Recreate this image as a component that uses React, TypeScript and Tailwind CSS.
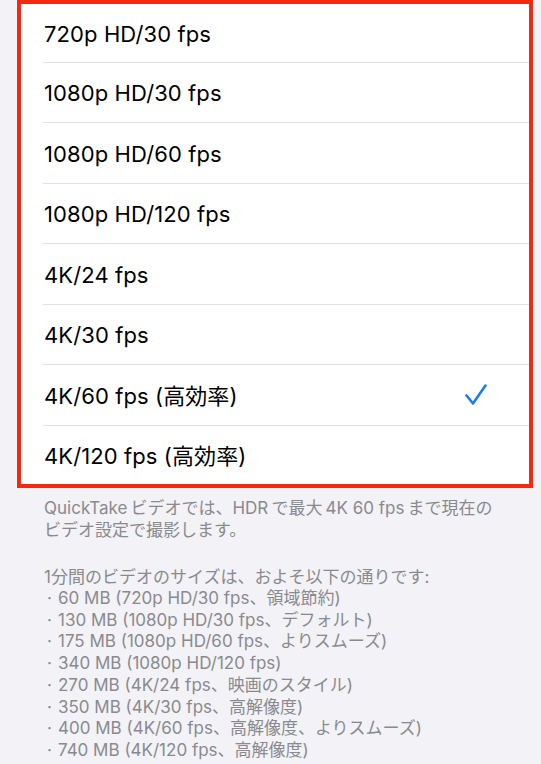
import React from "react";

const options = [
  "720p HD/30 fps",
  "1080p HD/30 fps",
  "1080p HD/60 fps",
  "1080p HD/120 fps",
  "4K/24 fps",
  "4K/30 fps",
  "4K/60 fps (高効率)",
  "4K/120 fps (高効率)",
];

const sizes = [
  "60 MB (720p HD/30 fps、領域節約)",
  "130 MB (1080p HD/30 fps、デフォルト)",
  "175 MB (1080p HD/60 fps、よりスムーズ)",
  "340 MB (1080p HD/120 fps)",
  "270 MB (4K/24 fps、映画のスタイル)",
  "350 MB (4K/30 fps、高解像度)",
  "400 MB (4K/60 fps、高解像度、よりスムーズ)",
  "740 MB (4K/120 fps、高解像度)",
];

function Check() {
  return (
    <svg width="22" height="22" viewBox="0 0 22 22" fill="none">
      <path
        d="M1.5 11.5 L8 19.5 L20.5 1.5"
        stroke="#1a7ef2"
        strokeWidth="2.6"
        strokeLinecap="round"
        strokeLinejoin="round"
      />
    </svg>
  );
}

export default function App() {
  const selected = 6;

  return (
    <div className="w-[541px] h-[764px] overflow-hidden bg-[#f2f2f7] font-['Inter','Noto_Sans_CJK_JP',sans-serif]">
      {/* option list, boxed in red */}
      <div className="ml-[17px] w-[516px] border-4 border-[#f42a10] bg-white">
        {options.map((label, i) => (
          <div
            key={label}
            className={`pl-[22px] ${
              i === 0 || i === options.length - 1 ? "h-[58.5px]" : "h-[60.5px]"
            }`}
          >
            <div
              className={`h-full flex items-center justify-between pr-[42px] ${
                i < options.length - 1 ? "border-b border-[#e1e1e5]" : ""
              }`}
            >
              <span className="pl-[1px] pt-[3px] text-[22px] text-black tracking-[0.1px]">
                {label}
              </span>
              {i === selected && <Check />}
            </div>
          </div>
        ))}
      </div>

      {/* footer notes */}
      <div className="px-[44px] pt-[9px] text-[17px] leading-[22px] text-[#8a8a8e]">
        <p>QuickTake&thinsp;ビデオでは、HDR&thinsp;で最大&thinsp;4K 60 fps&thinsp;まで現在の</p>
        <p>ビデオ設定で撮影します。</p>
        <p className="mt-[25px]">1分間のビデオのサイズは、およそ以下の通りです:</p>
        {sizes.map((s) => (
          <p key={s} className="leading-[21.7px]">
            <span className="inline-block w-[14px] pl-[3px]">·</span>
            {s}
          </p>
        ))}
      </div>
    </div>
  );
}
